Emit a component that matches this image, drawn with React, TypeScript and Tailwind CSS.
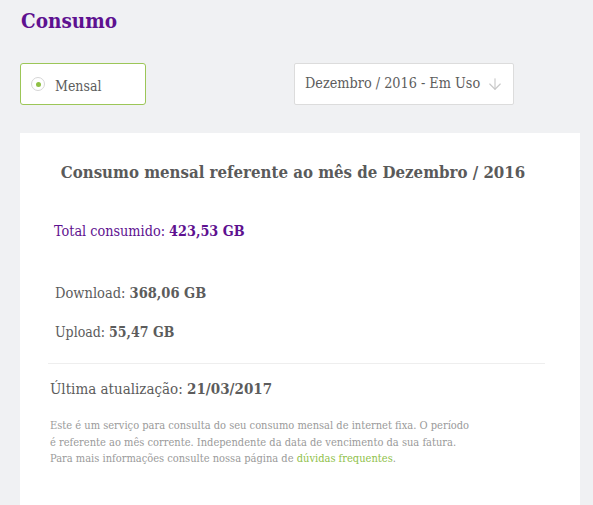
import { ArrowDown } from "lucide-react";

const App = () => {
  return (
    <div className="min-h-[505px] bg-[#f0f1f3] pl-5 pr-[13px] pt-[6px] font-['DejaVu_Serif_Condensed',serif] text-[#5c5c5c]">
      <h1 className="ml-px text-[20.5px] font-bold leading-[30px] text-[#5e1190]">Consumo</h1>

      <div className="mt-[27px] flex items-center">
        <label className="flex h-[42px] w-[126px] items-center rounded-[3px] border border-[#9cc657] bg-white pl-[10px]">
          <span className="flex h-[14px] w-[14px] items-center justify-center rounded-full border border-[#d6d6d6]">
            <span className="h-[5px] w-[5px] rounded-full bg-[#8fc045]" />
          </span>
          <span className="ml-[10px] mt-[4px] text-[14px] text-[#5c5c5c]">Mensal</span>
        </label>

        <div className="ml-[148px] flex h-[42px] w-[220px] items-center rounded-[2px] border border-[#dcdcdc] bg-white pl-[10px]">
          <span className="whitespace-nowrap text-[14.3px] text-[#5c5c5c]">Dezembro / 2016 - Em Uso</span>
          <ArrowDown className="ml-[6px] shrink-0 text-[#c8c8c8]" size={18} strokeWidth={1.5} />
        </div>
      </div>

      <div className="mt-[28px] bg-white pb-10 pt-[26px]">
        <h2 className="pr-[14px] text-center text-[16.7px] font-bold leading-[26px] text-[#5a5a5a]">
          Consumo mensal referente ao mês de Dezembro / 2016
        </h2>

        <p className="ml-[34px] mt-[36px] text-[14.3px] leading-[20px] text-[#5e1190]">
          Total consumido: <b>423,53 GB</b>
        </p>

        <p className="ml-[35px] mt-[42px] text-[14.5px] leading-[20px]">
          Download: <b>368,06 GB</b>
        </p>
        <p className="ml-[35px] mt-[19px] text-[14px] leading-[20px]">
          Upload: <b>55,47 GB</b>
        </p>

        <div className="ml-7 mr-[35px] mt-[21px] border-t border-[#eeeeee]" />

        <p className="ml-[30px] mt-[14px] text-[15px] leading-[22px]">
          Última atualização: <b>21/03/2017</b>
        </p>

        <p className="ml-[30px] mt-[18px] text-[11px] leading-[16.5px] text-[#9a9a9a]">
          Este é um serviço para consulta do seu consumo mensal de internet fixa. O período
          <br />
          é referente ao mês corrente. Independente da data de vencimento da sua fatura.
          <br />
          Para mais informações consulte nossa página de <a className="text-[#8fbf4a]">dúvidas frequentes</a>.
        </p>
      </div>
    </div>
  );
};

export default App;
